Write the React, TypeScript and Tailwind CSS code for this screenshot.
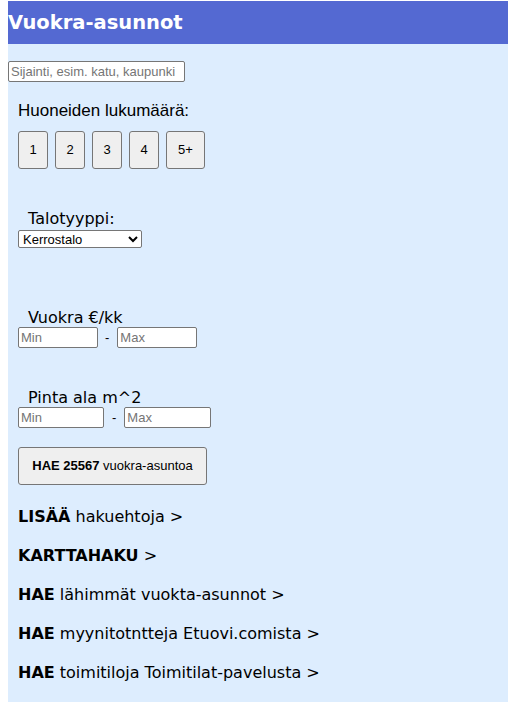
import React from "react";

const verdana = "font-['DejaVu_Sans',Verdana,sans-serif]";
const arial = "font-['Liberation_Sans',Arial,sans-serif]";

const rooms = ["1", "2", "3", "4", "5+"];

const links: { bold: string; rest: string }[] = [
  { bold: "LISÄÄ", rest: " hakuehtoja >" },
  { bold: "KARTTAHAKU", rest: " >" },
  { bold: "HAE", rest: " lähimmät vuokta-asunnot >" },
  { bold: "HAE", rest: " myynitotntteja Etuovi.comista >" },
  { bold: "HAE", rest: " toimitiloja Toimitilat-pavelusta >" },
];

function RangeRow({ minW, maxW, gap }: { minW: string; maxW: string; gap: string }) {
  return (
    <div className={`flex items-center ${arial} text-[13px]`}>
      <input
        placeholder="Min"
        className={`${minW} h-[21px] border border-[#767676] bg-white px-[2px] rounded-[2px] placeholder:text-[#757575]`}
      />
      <span className={`${gap} text-black`}>-</span>
      <input
        placeholder="Max"
        className={`${maxW} h-[21px] border border-[#767676] bg-white px-[2px] rounded-[2px] placeholder:text-[#757575]`}
      />
    </div>
  );
}

export default function App() {
  return (
    <div className="ml-2 mt-px w-[500px] bg-[#ddedfe] pb-[20px]">
      <div className={`flex h-[43px] items-center bg-[#5469d2] text-[19.5px] font-bold text-white ${verdana}`}>
        Vuokra-asunnot
      </div>

      <input
        placeholder="Sijainti, esim. katu, kaupunki"
        className={`mt-[17px] block h-[21px] w-[177px] rounded-[2px] border border-[#767676] bg-white px-[2px] text-[13px] ${arial} placeholder:text-[#757575]`}
      />

      <div className="pl-[10px]">
        <div className={`mt-[19px] text-[17px] leading-[20px] text-black ${arial}`}>Huoneiden lukumäärä:</div>

        <div className="mt-[10px] flex gap-[7px]">
          {rooms.map((r) => (
            <button
              key={r}
              className={`h-[38px] ${r === "5+" ? "w-[39px]" : "w-[30px]"} rounded-[3px] border border-[#767676] bg-[#efefef] text-[13px] text-black ${arial}`}
            >
              {r}
            </button>
          ))}
        </div>

        <div className={`mt-[40px] pl-[10px] text-[16px] leading-[19px] text-black ${verdana}`}>Talotyyppi:</div>
        <select
          className={`mt-[2px] block h-[18px] w-[124px] rounded-[2px] border border-[#767676] bg-white text-[13px] text-black ${arial}`}
          defaultValue="Kerrostalo"
        >
          <option>Kerrostalo</option>
          <option>Rivitalo</option>
          <option>Omakotitalo</option>
        </select>

        <div className={`mt-[60px] pl-[10px] text-[16px] leading-[19px] text-black ${verdana}`}>Vuokra €/kk</div>
        <RangeRow minW="w-[80px]" maxW="w-[80px]" gap="ml-[7px] mr-[8px]" />

        <div className={`mt-[40px] pl-[10px] text-[16px] leading-[19px] text-black ${verdana}`}>Pinta ala m^2</div>
        <RangeRow minW="w-[86px]" maxW="w-[87px]" gap="ml-[8px] mr-[8px]" />

        <button
          className={`mt-[19px] block h-[38px] w-[189px] rounded-[3px] border border-[#767676] bg-[#efefef] text-[13px] text-black ${arial}`}
        >
          <b>HAE 25567</b> vuokra-asuntoa
        </button>

        <div className={`mt-[22px] flex flex-col gap-[20px] text-[16px] leading-[19px] text-black ${verdana}`}>
          {links.map((l, i) => (
            <a key={i} href="#" className="block">
              <b>{l.bold}</b>
              {l.rest}
            </a>
          ))}
        </div>
      </div>
    </div>
  );
}
